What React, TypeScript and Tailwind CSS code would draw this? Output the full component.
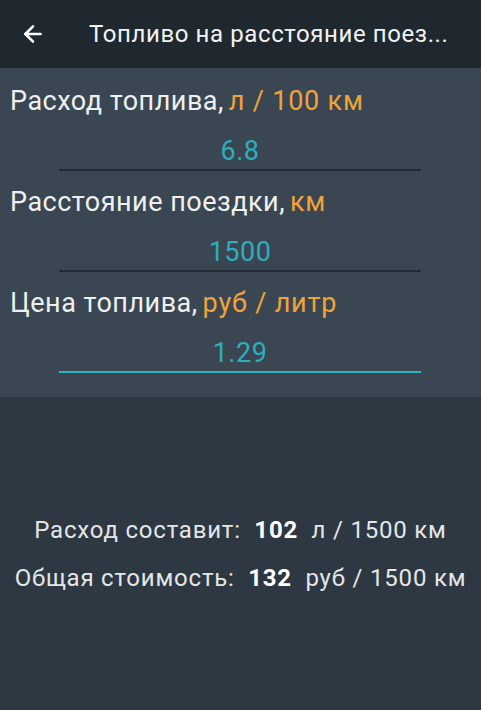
import { ArrowLeft } from 'lucide-react'

interface Field {
  label: string
  unit: string
  value: string
  active?: boolean
}

const fields: Field[] = [
  { label: 'Расход топлива,', unit: 'л / 100 км', value: '6.8' },
  { label: 'Расстояние поездки,', unit: 'км', value: '1500' },
  { label: 'Цена топлива,', unit: 'руб / литр', value: '1.29', active: true },
]

export default function App() {
  return (
    <div className="min-h-screen w-full bg-[#2d3842] font-['Roboto',sans-serif] text-[#eef0f1]">
      {/* Toolbar */}
      <div className="flex h-[68px] items-center bg-[#1f282f]">
        <ArrowLeft className="ml-[20px] h-[26px] w-[26px] text-white" strokeWidth={2.4} />
        <div className="ml-[43px] truncate text-[24px] leading-8 tracking-[0.6px] text-[#f2f2f2]">
          Топливо на расстояние поез...
        </div>
      </div>

      {/* Inputs */}
      <div className="bg-[#3a4752] pt-[17px] pb-[9px]">
        {fields.map((f) => (
          <div key={f.label} className="pb-[15px]">
            <div className="flex h-8 pl-[10px] text-[27px] leading-8 whitespace-nowrap">
              <span className="tracking-[0.5px]">{f.label}</span>
              <span className="ml-[5px] tracking-[0.8px] text-[#f0a33a]">{f.unit}</span>
            </div>
            <div
              className={`mt-[18px] ml-[59px] w-[362px] pb-[2px] border-b-2 ${
                f.active ? 'border-[#2fb2be]' : 'border-[#222b33]'
              }`}
            >
              <div className="h-8 text-center text-[27px] leading-8 tracking-[0.5px] text-[#2eaebb]">
                {f.value}
              </div>
            </div>
          </div>
        ))}
      </div>

      {/* Results */}
      <div className="mt-[117px] flex flex-col items-center gap-4 text-[24px] leading-8 tracking-[0.8px] text-[#e4e6e8] whitespace-nowrap">
        <div>
          Расход составит:&nbsp; <b className="font-bold text-white">102</b>&nbsp; л / 1500 км
        </div>
        <div>
          Общая стоимость:&nbsp; <b className="font-bold text-white">132</b>&nbsp; руб / 1500 км
        </div>
      </div>
    </div>
  )
}
